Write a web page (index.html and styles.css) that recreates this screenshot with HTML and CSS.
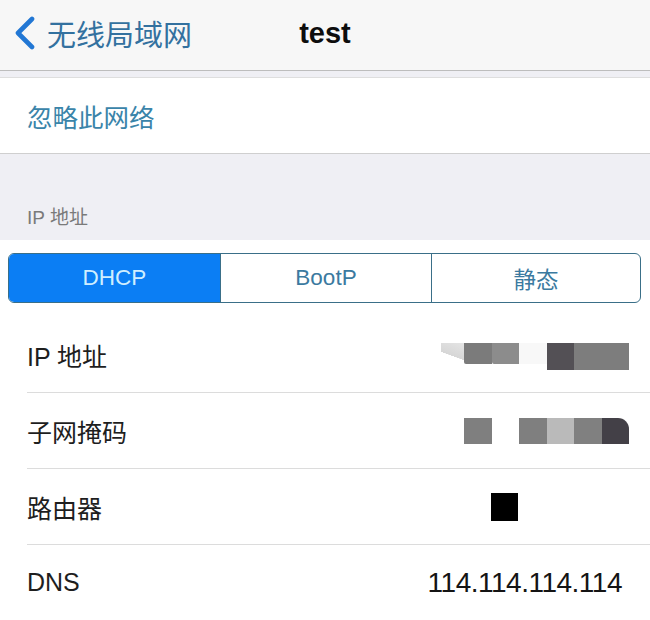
FILE: index.html
```html
<!DOCTYPE html>
<html lang="zh-CN">
<head>
<meta charset="utf-8">
<title>test</title>
<link rel="stylesheet" href="styles.css">
</head>
<body>
<div class="screen">
  <header class="nav">
    <div class="back">
      <svg class="chevron" width="24" height="34" viewBox="0 0 24 34" aria-hidden="true">
        <path d="M19 3 L5 17 L19 31" fill="none" stroke="#2277d4" stroke-width="4.6" stroke-linecap="round" stroke-linejoin="round"/>
      </svg>
      <span class="back-text">无线局域网</span>
    </div>
    <div class="title">test</div>
    <div class="nav-spacer"></div>
  </header>

  <section class="group group-first">
    <div class="action-row">忽略此网络</div>
  </section>

  <div class="section-header">IP 地址</div>

  <div class="segment-wrap">
    <div class="segment">
      <div class="seg seg-active">DHCP</div>
      <div class="seg">BootP</div>
      <div class="seg">静态</div>
    </div>
  </div>

  <div class="rows">
    <div class="row">
      <span class="label">IP 地址</span>
      <span class="mosaic mosaic-ip">
        <i class="px fade"></i><i class="px g7b short"></i><i class="px g8c short"></i><i class="px gap"></i><i class="px g53"></i><i class="px g7d wide"></i>
      </span>
    </div>
    <div class="row">
      <span class="label">子网掩码</span>
      <span class="mosaic">
        <i class="px g7f"></i><i class="px blank"></i><i class="px g7f"></i><i class="px gba"></i><i class="px g80"></i><i class="px g43 corner"></i>
      </span>
    </div>
    <div class="row">
      <span class="label">路由器</span>
      <span class="mosaic mosaic-router">
        <i class="px black"></i>
      </span>
    </div>
    <div class="row row-last">
      <span class="label">DNS</span>
      <span class="value">114.114.114.114</span>
    </div>
  </div>
</div>
</body>
</html>
```

FILE: styles.css
```css
html, body {
  margin: 0;
  padding: 0;
}

body {
  background: #ffffff;
  font-family: "Liberation Sans", "Noto Sans CJK SC", sans-serif;
  color: #1c1c1c;
}

.screen {
  width: 650px;
  height: 620px;
  overflow: hidden;
  background: #efeff4;
}

/* Navigation bar */
.nav {
  height: 70px;
  background: #f7f7f7;
  border-bottom: 1px solid #bdbdbd;
  display: grid;
  grid-template-columns: 1fr auto 1fr;
  align-items: center;
}

.back {
  display: flex;
  align-items: center;
  padding-left: 13px;
  gap: 10px;
  margin-top: -4px;
}

.chevron {
  display: block;
}

.back-text {
  font-family: "Noto Sans CJK SC", sans-serif;
  font-size: 29px;
  color: #33719f;
  letter-spacing: 0;
  line-height: 1;
}

.title {
  font-family: "Liberation Sans", "Noto Sans CJK SC", sans-serif;
  font-weight: bold;
  font-size: 29px;
  color: #0d0d0d;
  margin-top: -4px;
}

/* First group */
.group-first {
  margin-top: 6px;
  background: #ffffff;
  border-top: 1px solid #dedede;
  border-bottom: 1px solid #cfcfcf;
}

.action-row {
  height: 75px;
  display: flex;
  align-items: center;
  padding-left: 27px;
  font-family: "Noto Sans CJK SC", sans-serif;
  font-size: 25.5px;
  color: #3a84a9;
}

/* Section header */
.section-header {
  height: 86px;
  box-sizing: border-box;
  padding: 52px 0 0 27px;
  font-family: "Liberation Sans", "Noto Sans CJK SC", sans-serif;
  font-size: 19px;
  line-height: 24px;
  color: #7a7a7a;
}

/* Segmented control */
.segment-wrap {
  background: #ffffff;
  padding: 13px 9px 14px 8px;
}

.segment {
  height: 50px;
  box-sizing: border-box;
  border: 1.5px solid #3a6f88;
  border-radius: 6px;
  display: grid;
  grid-template-columns: 211px 211px 1fr;
  overflow: hidden;
}

.seg {
  display: flex;
  align-items: center;
  justify-content: center;
  font-family: "Liberation Sans", "Noto Sans CJK SC", sans-serif;
  font-size: 22.5px;
  color: #3b7aa0;
  border-left: 1.5px solid #3a6f88;
}

.seg:first-child {
  border-left: none;
}

.seg-active {
  background: #0b7ef4;
  color: #cfeeff;
}

/* Info rows */
.rows {
  background: #ffffff;
}

.row {
  height: 75px;
  margin-left: 27px;
  padding-right: 21px;
  border-bottom: 1px solid #dcdcdc;
  display: flex;
  align-items: center;
  justify-content: space-between;
}

.row-last {
  border-bottom: none;
}

.label {
  font-family: "Liberation Sans", "Noto Sans CJK SC", sans-serif;
  font-size: 25px;
  color: #1e1e1e;
}

.value {
  font-family: "Liberation Sans", sans-serif;
  font-size: 28px;
  letter-spacing: -0.5px;
  color: #141414;
  margin-right: 7px;
}

/* Pixelated (redacted) values */
.mosaic {
  display: flex;
  align-items: flex-start;
  height: 26px;
}

.mosaic-ip {
  height: 27px;
  margin-top: 4px;
}

.mosaic-router {
  margin-right: 111px;
  height: 28px;
}

.px {
  display: block;
  width: 27.5px;
  height: 100%;
}

.px.short {
  height: 21px;
  border-bottom-left-radius: 2px;
}

.px.wide {
  width: 55px;
}

.px.fade {
  width: 23px;
  height: 20px;
  background: linear-gradient(200deg, #e4e4e4 0%, #d6d6d6 60%, #ffffff 61%);
}

.px.gap { background: #f8f8f8; height: 21px; }
.px.blank { background: transparent; }
.px.g7b { background: #7b7b7b; }
.px.g8c { background: #8c8c8c; }
.px.g53 { background: #535055; }
.px.g7d { background: #7d7d7d; }
.px.g7f { background: #7f7f7f; }
.px.gba { background: #bababa; }
.px.g80 { background: #808080; }
.px.g43 { background: #434047; }
.px.corner { border-top-right-radius: 11px; }
.px.black { background: #000000; height: 28px; }
```
